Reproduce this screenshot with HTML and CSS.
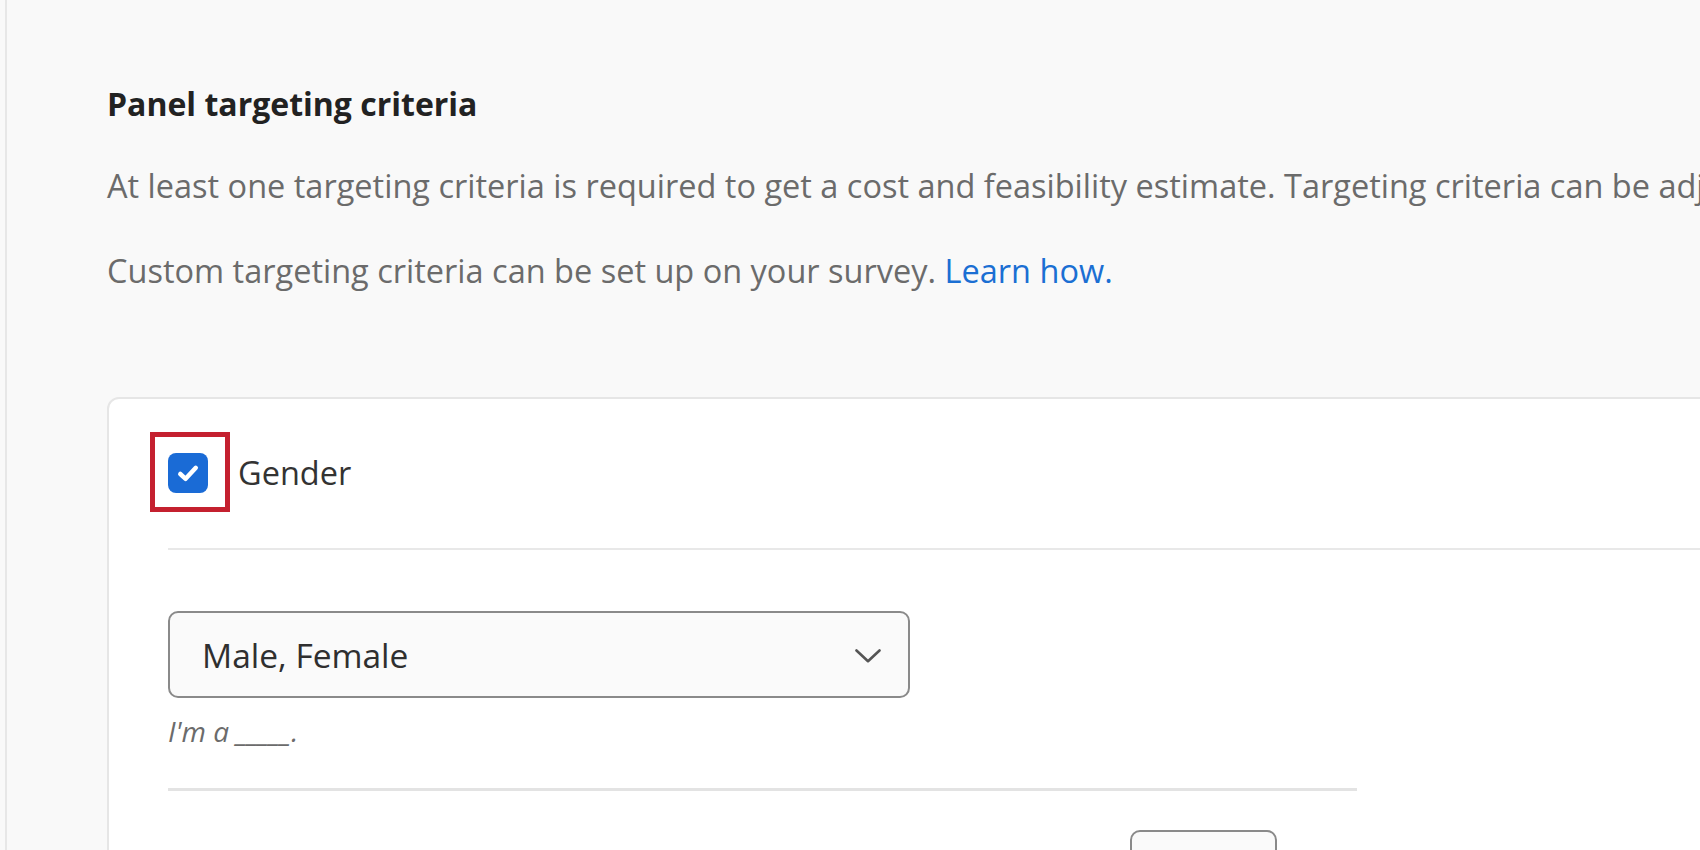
FILE: index.html
```html
<!DOCTYPE html>
<html lang="en">
<head>
<meta charset="utf-8">
<title>Panel targeting criteria</title>
<link rel="stylesheet" href="styles.css">
</head>
<body>
<main class="page">
  <h2 class="title">Panel targeting criteria</h2>
  <p class="intro">At least one targeting criteria is required to get a cost and feasibility estimate. Targeting criteria can be adjusted later.</p>
  <p class="intro second">Custom targeting criteria can be set up on your survey. <a class="link" href="#">Learn how.</a></p>

  <section class="card">
    <div class="crit-head">
      <span class="check-wrap">
        <span class="checkbox">
          <svg width="40" height="40" viewBox="0 0 40 40" aria-hidden="true">
            <path d="M12.3 21 L17.6 25.8 L27.8 14.8" fill="none" stroke="#fff" stroke-width="4.5" stroke-linecap="round" stroke-linejoin="round"/>
          </svg>
        </span>
        <span class="highlight"></span>
      </span>
      <span class="crit-label">Gender</span>
    </div>
    <div class="divider"></div>
    <div class="crit-body">
      <div class="select">
        <span class="select-text">Male, Female</span>
        <svg class="chev" width="26" height="14" viewBox="0 0 26 14" aria-hidden="true">
          <polyline points="1.5,1.5 13,12.2 24.5,1.5" fill="none" stroke="#555" stroke-width="2.6" stroke-linecap="round" stroke-linejoin="round"/>
        </svg>
      </div>
      <p class="hint">I'm a _____.</p>
      <div class="divider short"></div>
      <div class="next-row">
        <span class="next-spacer"></span>
        <span class="num-box"></span>
      </div>
    </div>
  </section>
</main>
</body>
</html>
```

FILE: styles.css
```css
html, body {
  margin: 0;
  padding: 0;
  width: 1700px;
  height: 850px;
  overflow: hidden;
  background: #f9f9f9;
  font-family: "Open Sans", "Noto Sans", sans-serif;
}

.page {
  margin-left: 5px;
  border-left: 2px solid #e7e7e7;
  min-height: 850px;
  padding: 82px 0 0 100px;
  box-sizing: border-box;
}

.title {
  margin: 0;
  font-size: 32px;
  line-height: 44px;
  font-weight: 700;
  color: #222;
  white-space: nowrap;
}

.intro {
  margin: 38px 0 0;
  font-size: 32.5px;
  line-height: 44px;
  color: #6b6b6b;
  white-space: nowrap;
}

.intro.second {
  margin-top: 41px;
}

.link {
  color: #1b6fd3;
  text-decoration: none;
}

.card {
  margin-top: 104px;
  width: 1700px;
  height: 600px;
  background: #fff;
  border: 2px solid #e6e6e6;
  border-radius: 12px;
  padding: 54px 0 0 59px;
  box-sizing: border-box;
}

.crit-head {
  display: flex;
  align-items: center;
  height: 40px;
}

.check-wrap {
  position: relative;
  width: 40px;
  height: 40px;
}

.checkbox {
  display: block;
  width: 40px;
  height: 40px;
  border-radius: 8px;
  background: #1a6bd6;
}

.checkbox svg {
  display: block;
}

.highlight {
  position: absolute;
  left: -18px;
  top: -21px;
  width: 80px;
  height: 80px;
  border: 5px solid #c4202f;
  box-sizing: border-box;
}

.crit-label {
  margin-left: 30px;
  font-size: 32.5px;
  line-height: 40px;
  color: #333;
}

.divider {
  margin-top: 55px;
  height: 2px;
  background: #e8e8e8;
}

.crit-body {
  padding-top: 61px;
}

.select {
  display: flex;
  align-items: center;
  justify-content: space-between;
  width: 742px;
  height: 87px;
  box-sizing: border-box;
  border: 2px solid #8a8a8a;
  border-radius: 10px;
  background: #fafafa;
  padding: 0 27px 0 32px;
}

.select-text {
  font-size: 33.5px;
  line-height: 40px;
  color: #2f2f2f;
}

.chev {
  display: block;
  margin-top: 2px;
}

.hint {
  margin: 15px 0 0;
  font-size: 28px;
  line-height: 36px;
  font-style: italic;
  color: #6b6b6b;
}

.divider.short {
  margin-top: 39px;
  width: 1189px;
  height: 3px;
  background: #e3e3e3;
}

.next-row {
  display: flex;
  margin-top: 39px;
}

.next-spacer {
  width: 962px;
}

.num-box {
  width: 147px;
  height: 70px;
  box-sizing: border-box;
  border: 2px solid #8a8a8a;
  border-radius: 10px;
  background: #fafafa;
}
```
